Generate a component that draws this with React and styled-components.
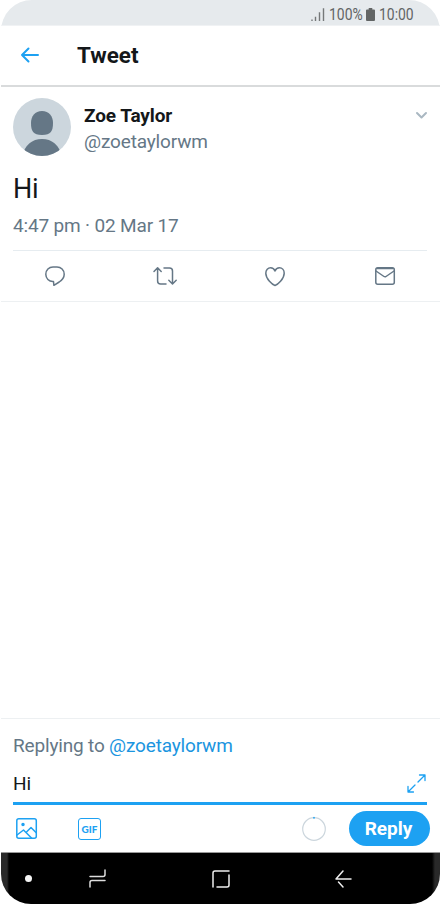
import React from "react";
import styled, { createGlobalStyle } from "styled-components";

const Global = createGlobalStyle`
  * { box-sizing: border-box; }
  body { margin: 0; background: #fff; font-family: Roboto, sans-serif; }
  svg { display: block; flex: none; overflow: visible; }
`;
const Screen = styled.main`
  width: 439px; height: 904px; margin-left: 1px; overflow: hidden;
  display: flex; flex-direction: column; background: #fff;
  border-radius: 31px 31px 30px 30px;
`;
const StatusBar = styled.div`
  height: 26px; flex: none; padding: 3px 27px 0 0; background: #e6eaed;
  display: flex; justify-content: flex-end; align-items: center;
  border-bottom: 1px solid #f0f2f4;
`;
const StatusText = styled.span`
  width: ${p => p.$width}px; margin: ${p => p.$margin}; padding-top: 1px;
  font-size: 16px; line-height: 20px; color: #626565; white-space: nowrap;
  transform: scaleX(.87); transform-origin: left;
`;
const Header = styled.header`
  height: 61px; flex: none; padding: 0 20px 1px 19px; display: flex; align-items: center; gap: 38px;
  border-bottom: 2px solid #d9dbdc;
`;
const Title = styled.h1`
  margin: 0; padding-bottom: 1px; font-size: 22.4px; line-height: 28px; font-weight: 700; color: #14171a;
`;
const Tweet = styled.article`
  height: 215px; flex: none; padding: 11px 13px 0 12px; border-bottom: 1px solid #edf0f2;
`;
const Author = styled.div`display: flex; height: 58px;`;
const Names = styled.div`flex: 1; padding: 5px 0 0 13px;`;
const Name = styled.div`
  font-size: 19px; line-height: 25px; font-weight: 700; letter-spacing: -.1px; color: #14171a;
`;
const Handle = styled.div`
  font-size: 19px; line-height: 27px; letter-spacing: -.15px; color: #657786;
`;
const Chevron = styled.div`padding-top: 14px;`;
const Message = styled.p`
  margin: 16px 0 0; font-size: 27px; line-height: 34px; letter-spacing: -.2px; color: #14171a;
`;
const Time = styled.time`
  display: block; margin-top: 7px; height: 38px; font-size: 19px; line-height: 25px;
  letter-spacing: -.16px; color: #657786; border-bottom: 1px solid #e6ecf0;
`;
const Actions = styled.div`
  height: 50px; display: grid; grid-template-columns: repeat(4, 110px); margin: 0 -13px;
  align-items: center; justify-items: center;
`;
const Spacer = styled.div`flex: 1;`;
const Composer = styled.section`
  height: 134px; flex: none; padding: 14px 13px 0 12px; border-top: 1px solid #edf0f2;
`;
const Replying = styled.div`
  font-size: 19px; line-height: 26px; letter-spacing: -.17px; color: #657786;
`;
const Mention = styled.span`color: #1b95e0;`;
const Field = styled.div`
  height: 46px; padding-top: 6px; display: flex; align-items: center; justify-content: space-between;
  border-bottom: 3px solid #1da1f2; font-size: 19px; letter-spacing: -.15px; color: #14171a;
`;
const Expand = styled.div`margin-top: -1px; padding-right: 1px;`;
const Tools = styled.div`
  display: flex; align-items: center; height: 47px; margin-right: -3px; padding-left: 3px;
`;
const Gif = styled.div`
  width: 23px; height: 22px; margin-left: 41px; border: 1.5px solid #1da1f2; border-radius: 3px;
  color: #1da1f2; font: 900 10px/20px Lato, sans-serif; text-align: center;
`;
const Counter = styled.div`margin-left: auto;`;
const Reply = styled.button`
  width: 81px; height: 35px; margin-left: 23px; padding: 0 2px 0 0; border: 0; border-radius: 18px;
  background: #1da1f2; color: #fff; font: 700 19px/35px Roboto, sans-serif;
`;
const NavBar = styled.nav`
  height: 52px; flex: none; display: flex; align-items: center;
  border-top: 1px solid #999;
  background: linear-gradient(90deg, #292929 0 6px, #000 8px 431px, #292929 434px);
`;
const Dot = styled.span`width: 7px; height: 7px; border-radius: 50%; background: #f5f5f5; margin: 0 57px 0 24px;`;
const NavIcon = styled.div`margin-right: ${p => p.$gap}px;`;

const Icon = ({ w, h, color = "#657786", sw = 1.5, children }) => (
  <svg width={w} height={h} viewBox={`0 0 ${w} ${h}`} fill="none" stroke={color}
    strokeWidth={sw} strokeLinecap="round" strokeLinejoin="round">{children}</svg>
);
const BLUE = "#1da1f2";

export default function App() {
  return (
    <>
      <Global />
      <Screen>
        <StatusBar>
          <Icon w={14} h={13} color="#757879" sw={1.4}>
            <path d="M1 12.200v0M4.500 12.200V9.500M8.500 12.200V5M12.500 12.200V1" strokeLinecap="square" />
          </Icon>
          <StatusText $width={33} $margin="0 4px 0 4px">100%</StatusText>
          <svg width="9" height="13" viewBox="0 0 9 13" fill="#626565">
            <path d="M2.700 0h3.600v1.500H8q1 0 1 1V12q0 1-1 1H1q-1 0-1-1V2.500q0-1 1-1h1.700z" />
          </svg>
          <StatusText $width={34} $margin="0 0 0 4px">10:00</StatusText>
        </StatusBar>
        <Header>
          <Icon w={19} h={16} color={BLUE} sw={2}>
            <path d="M18 8H2M8.500 1.500 2 8l6.500 6.500" />
          </Icon>
          <Title>Tweet</Title>
        </Header>
        <Tweet>
          <Author>
            <svg width="58" height="58" viewBox="0 0 58 58">
              <defs><clipPath id="face"><circle cx="29" cy="29" r="29" /></clipPath></defs>
              <g clipPath="url(#face)">
                <rect width="58" height="58" fill="#ccd6dd" />
                <path d="M29 13c-7 0-11 5-11 12 0 8 2 12 11 12s11-4 11-12c0-7-4-12-11-12z" fill="#657786" />
                <path d="M9 58q5-17 20-17T49 58z" fill="#657786" />
              </g>
            </svg>
            <Names>
              <Name>Zoe Taylor</Name>
              <Handle>@zoetaylorwm</Handle>
            </Names>
            <Chevron>
              <Icon w={11} h={7} color="#aab8c2" sw={2}><path d="m1 1 4.500 4.500L10 1" /></Icon>
            </Chevron>
          </Author>
          <Message>Hi</Message>
          <Time>4:47 pm · 02 Mar 17</Time>
          <Actions>
            <Icon w={20} h={20}>
              <path d="M8.500 15.500h-.7C4 15.500.8 12.500.8 8.300.8 4 4 1 8 1h4c4 0 7.200 3 7.200 7.200 0 3.500-2 5.800-5 7.800l-5.300 3.300z" />
            </Icon>
            <Icon w={24} h={18}>
              <path d="m1 4.500 3.600-3.700L8.200 4.500M4.600 1v13q0 3 3 3H13M11 1h5.500q3 0 3 3v12.800M15.800 13.300l3.700 3.700 3.700-3.700" />
            </Icon>
            <Icon w={20} h={19}>
              <path d="M10 18.500C7.500 17.800.8 12 .8 6.200.8 3 3 .8 5.600.8 7.700.8 9.300 2.200 10 4c.7-1.800 2.300-3.200 4.400-3.200 2.600 0 4.800 2.200 4.800 5.400 0 5.800-6.700 11.600-9.200 12.300z" />
            </Icon>
            <Icon w={20} h={18}>
              <rect x=".8" y=".8" width="18.500" height="16.500" rx="2" />
              <path d="m1 4 8 5.500q1 .7 2 0L19 4M2 1.500h16" />
            </Icon>
          </Actions>
        </Tweet>
        <Spacer />
        <Composer>
          <Replying>Replying to <Mention>@zoetaylorwm</Mention></Replying>
          <Field>
            Hi
            <Expand>
              <Icon w={19} h={19} color={BLUE} sw={1.3}>
                <path d="m1 18 7-7M11 8l7-7M12.500 1H18v5.500M1 12.500V18h5.500" />
              </Icon>
            </Expand>
          </Field>
          <Tools>
            <Icon w={21} h={21} color={BLUE}>
              <rect x=".8" y=".8" width="19.500" height="19.500" rx="2" />
              <circle cx="7" cy="6.500" r="1" fill={BLUE} />
              <path d="m1 17 6.500-5 8 8M10.500 14 15 9.500l5 5" />
            </Icon>
            <Gif>GIF</Gif>
            <Counter>
              <Icon w={24} h={24} color="#ccd6dd" sw={1.2}>
                <circle cx="12" cy="12" r="11.300" /><path d="M12 .3v1" stroke={BLUE} />
              </Icon>
            </Counter>
            <Reply>Reply</Reply>
          </Tools>
        </Composer>
        <NavBar>
          <Dot />
          <NavIcon $gap={106}>
            <Icon w={17} h={19} color="#ddd"><path d="M1 7.500h13q2 0 2-2V1M1 18v-4.500q0-2 2-2h13" /></Icon>
          </NavIcon>
          <NavIcon $gap={105}>
            <Icon w={18} h={18} color="#eee"><path d="M1 17V3q0-2 2-2h14M17 5v10q0 2-2 2H5" /></Icon>
          </NavIcon>
          <NavIcon $gap={0}>
            <Icon w={17} h={18} color="#eee"><path d="M16 9H1l7-8M3.500 12 8 17" /></Icon>
          </NavIcon>
        </NavBar>
      </Screen>
    </>
  );
}
